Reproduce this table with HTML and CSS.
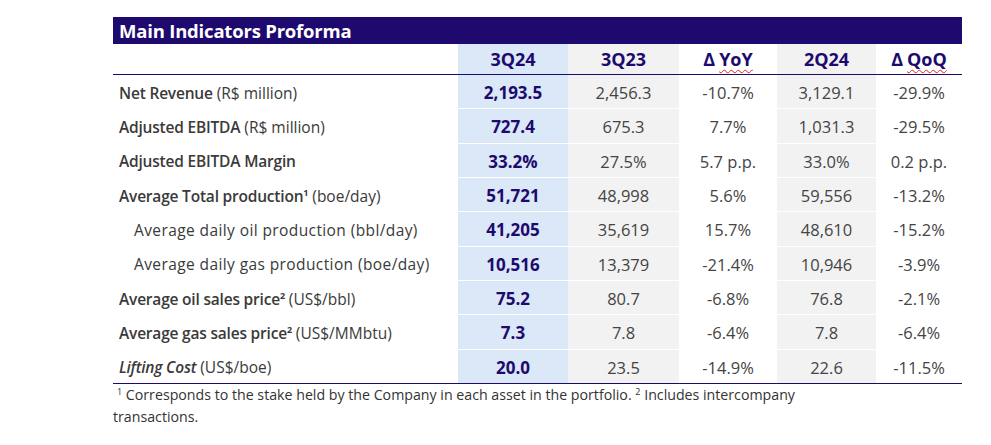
FILE: index.html
```html
<!DOCTYPE html>
<html lang="en">
<head>
<meta charset="utf-8">
<title>Main Indicators Proforma</title>
<link rel="stylesheet" href="styles.css">
</head>
<body>
<div class="report">
  <div class="title">Main Indicators Proforma</div>
  <div class="row head">
    <div class="cell label"></div>
    <div class="cell c-cur">3Q24</div>
    <div class="cell c-grey">3Q23</div>
    <div class="cell c-white">Δ <span class="nav-u"><span class="spell">YoY</span></span></div>
    <div class="cell c-grey">2Q24</div>
    <div class="cell c-white">Δ <span class="nav-u"><span class="spell">QoQ</span></span></div>
  </div>
  <div class="rows">
    <div class="row">
      <div class="cell label"><b>Net Revenue</b>&nbsp;(R$ million)</div>
      <div class="cell c-cur">2,193.5</div>
      <div class="cell c-grey">2,456.3</div>
      <div class="cell c-white">-10.7%</div>
      <div class="cell c-grey">3,129.1</div>
      <div class="cell c-white">-29.9%</div>
    </div>
    <div class="row">
      <div class="cell label"><b>Adjusted EBITDA</b>&nbsp;(R$ million)</div>
      <div class="cell c-cur">727.4</div>
      <div class="cell c-grey">675.3</div>
      <div class="cell c-white">7.7%</div>
      <div class="cell c-grey">1,031.3</div>
      <div class="cell c-white">-29.5%</div>
    </div>
    <div class="row">
      <div class="cell label"><b>Adjusted EBITDA Margin</b></div>
      <div class="cell c-cur">33.2%</div>
      <div class="cell c-grey">27.5%</div>
      <div class="cell c-white">5.7 p.p.</div>
      <div class="cell c-grey">33.0%</div>
      <div class="cell c-white">0.2 p.p.</div>
    </div>
    <div class="row">
      <div class="cell label"><b>Average Total production<sup>1</sup></b>&nbsp;(boe/day)</div>
      <div class="cell c-cur">51,721</div>
      <div class="cell c-grey">48,998</div>
      <div class="cell c-white">5.6%</div>
      <div class="cell c-grey">59,556</div>
      <div class="cell c-white">-13.2%</div>
    </div>
    <div class="row">
      <div class="cell label sub">Average daily oil production (bbl/day)</div>
      <div class="cell c-cur">41,205</div>
      <div class="cell c-grey">35,619</div>
      <div class="cell c-white">15.7%</div>
      <div class="cell c-grey">48,610</div>
      <div class="cell c-white">-15.2%</div>
    </div>
    <div class="row">
      <div class="cell label sub">Average daily gas production (boe/day)</div>
      <div class="cell c-cur">10,516</div>
      <div class="cell c-grey">13,379</div>
      <div class="cell c-white">-21.4%</div>
      <div class="cell c-grey">10,946</div>
      <div class="cell c-white">-3.9%</div>
    </div>
    <div class="row">
      <div class="cell label"><b>Average oil sales price<sup>2</sup></b>&nbsp;(US$/bbl)</div>
      <div class="cell c-cur">75.2</div>
      <div class="cell c-grey">80.7</div>
      <div class="cell c-white">-6.8%</div>
      <div class="cell c-grey">76.8</div>
      <div class="cell c-white">-2.1%</div>
    </div>
    <div class="row">
      <div class="cell label"><b>Average gas sales price<sup>2</sup></b>&nbsp;(US$/MMbtu)</div>
      <div class="cell c-cur">7.3</div>
      <div class="cell c-grey">7.8</div>
      <div class="cell c-white">-6.4%</div>
      <div class="cell c-grey">7.8</div>
      <div class="cell c-white">-6.4%</div>
    </div>
    <div class="row">
      <div class="cell label"><b><i>Lifting Cost</i></b>&nbsp;(US$/boe)</div>
      <div class="cell c-cur">20.0</div>
      <div class="cell c-grey">23.5</div>
      <div class="cell c-white">-14.9%</div>
      <div class="cell c-grey">22.6</div>
      <div class="cell c-white">-11.5%</div>
    </div>
  </div>
  <p class="note"><sup>1</sup> Corresponds to the stake held by the Company in each asset in the portfolio. <sup>2</sup> Includes intercompany<br>transactions.</p>
</div>
</body>
</html>
```

FILE: styles.css
```css
* { box-sizing: border-box; }
html, body { margin: 0; padding: 0; background: #ffffff; }
body {
  font-family: "Open Sans", "Liberation Sans", Arial, sans-serif;
  color: #3b3b3b;
}
.report {
  width: 962px;
  padding: 17px 0 0 113px;
}
.title {
  width: 849px;
  height: 27px;
  background: #1e0a6e;
  color: #ffffff;
  font-weight: 700;
  font-size: 18.5px;
  line-height: 27px;
  padding-left: 6px;
  letter-spacing: -0.2px;
}
.row {
  display: grid;
  grid-template-columns: 345px 110px 111px 98px 99px 86px;
  height: 33.33px;
}
.row.head {
  height: 31px;
  border-bottom: 1px solid #1e0a6e;
}
.rows {
  display: flex;
  flex-direction: column;
  gap: 1px;
  border-bottom: 1px solid #1e0a6e;
  width: 849px;
}
.cell {
  display: flex;
  align-items: center;
  justify-content: center;
  font-size: 16.5px;
  color: #444444;
  white-space: nowrap;
  padding-top: 2px;
}
.cell.label {
  justify-content: flex-start;
  padding-left: 6px;
  font-size: 15.5px;
  color: #3a3a3a;
}
.cell.label b { font-weight: 600; color: #3a3a3a; letter-spacing: -0.2px; }
.cell.label.sub { padding-left: 21px; letter-spacing: 0.4px; }
.cell sup { font-size: 9px; line-height: 0; vertical-align: 6px; font-weight: 700; }
.c-cur { background: #dae8f7; color: #1e0a6e; font-weight: 700; font-size: 17px; }
.c-grey { background: #f2f2f2; }
.c-white { background: #ffffff; }
.head .cell {
  font-weight: 700;
  font-size: 18px;
  color: #1e0a6e;
  padding-top: 0;
}
.nav-u { margin-left: 4px; }
.spell {
  text-decoration: underline wavy #e0201b;
  text-decoration-thickness: 1px;
  text-underline-offset: 3px;
}
.note {
  margin: 0;
  width: 849px;
  font-size: 14.2px;
  line-height: 22px;
  color: #333333;
  text-indent: 4px;
}
.note sup { font-size: 9px; line-height: 0; vertical-align: 5px; }
```
